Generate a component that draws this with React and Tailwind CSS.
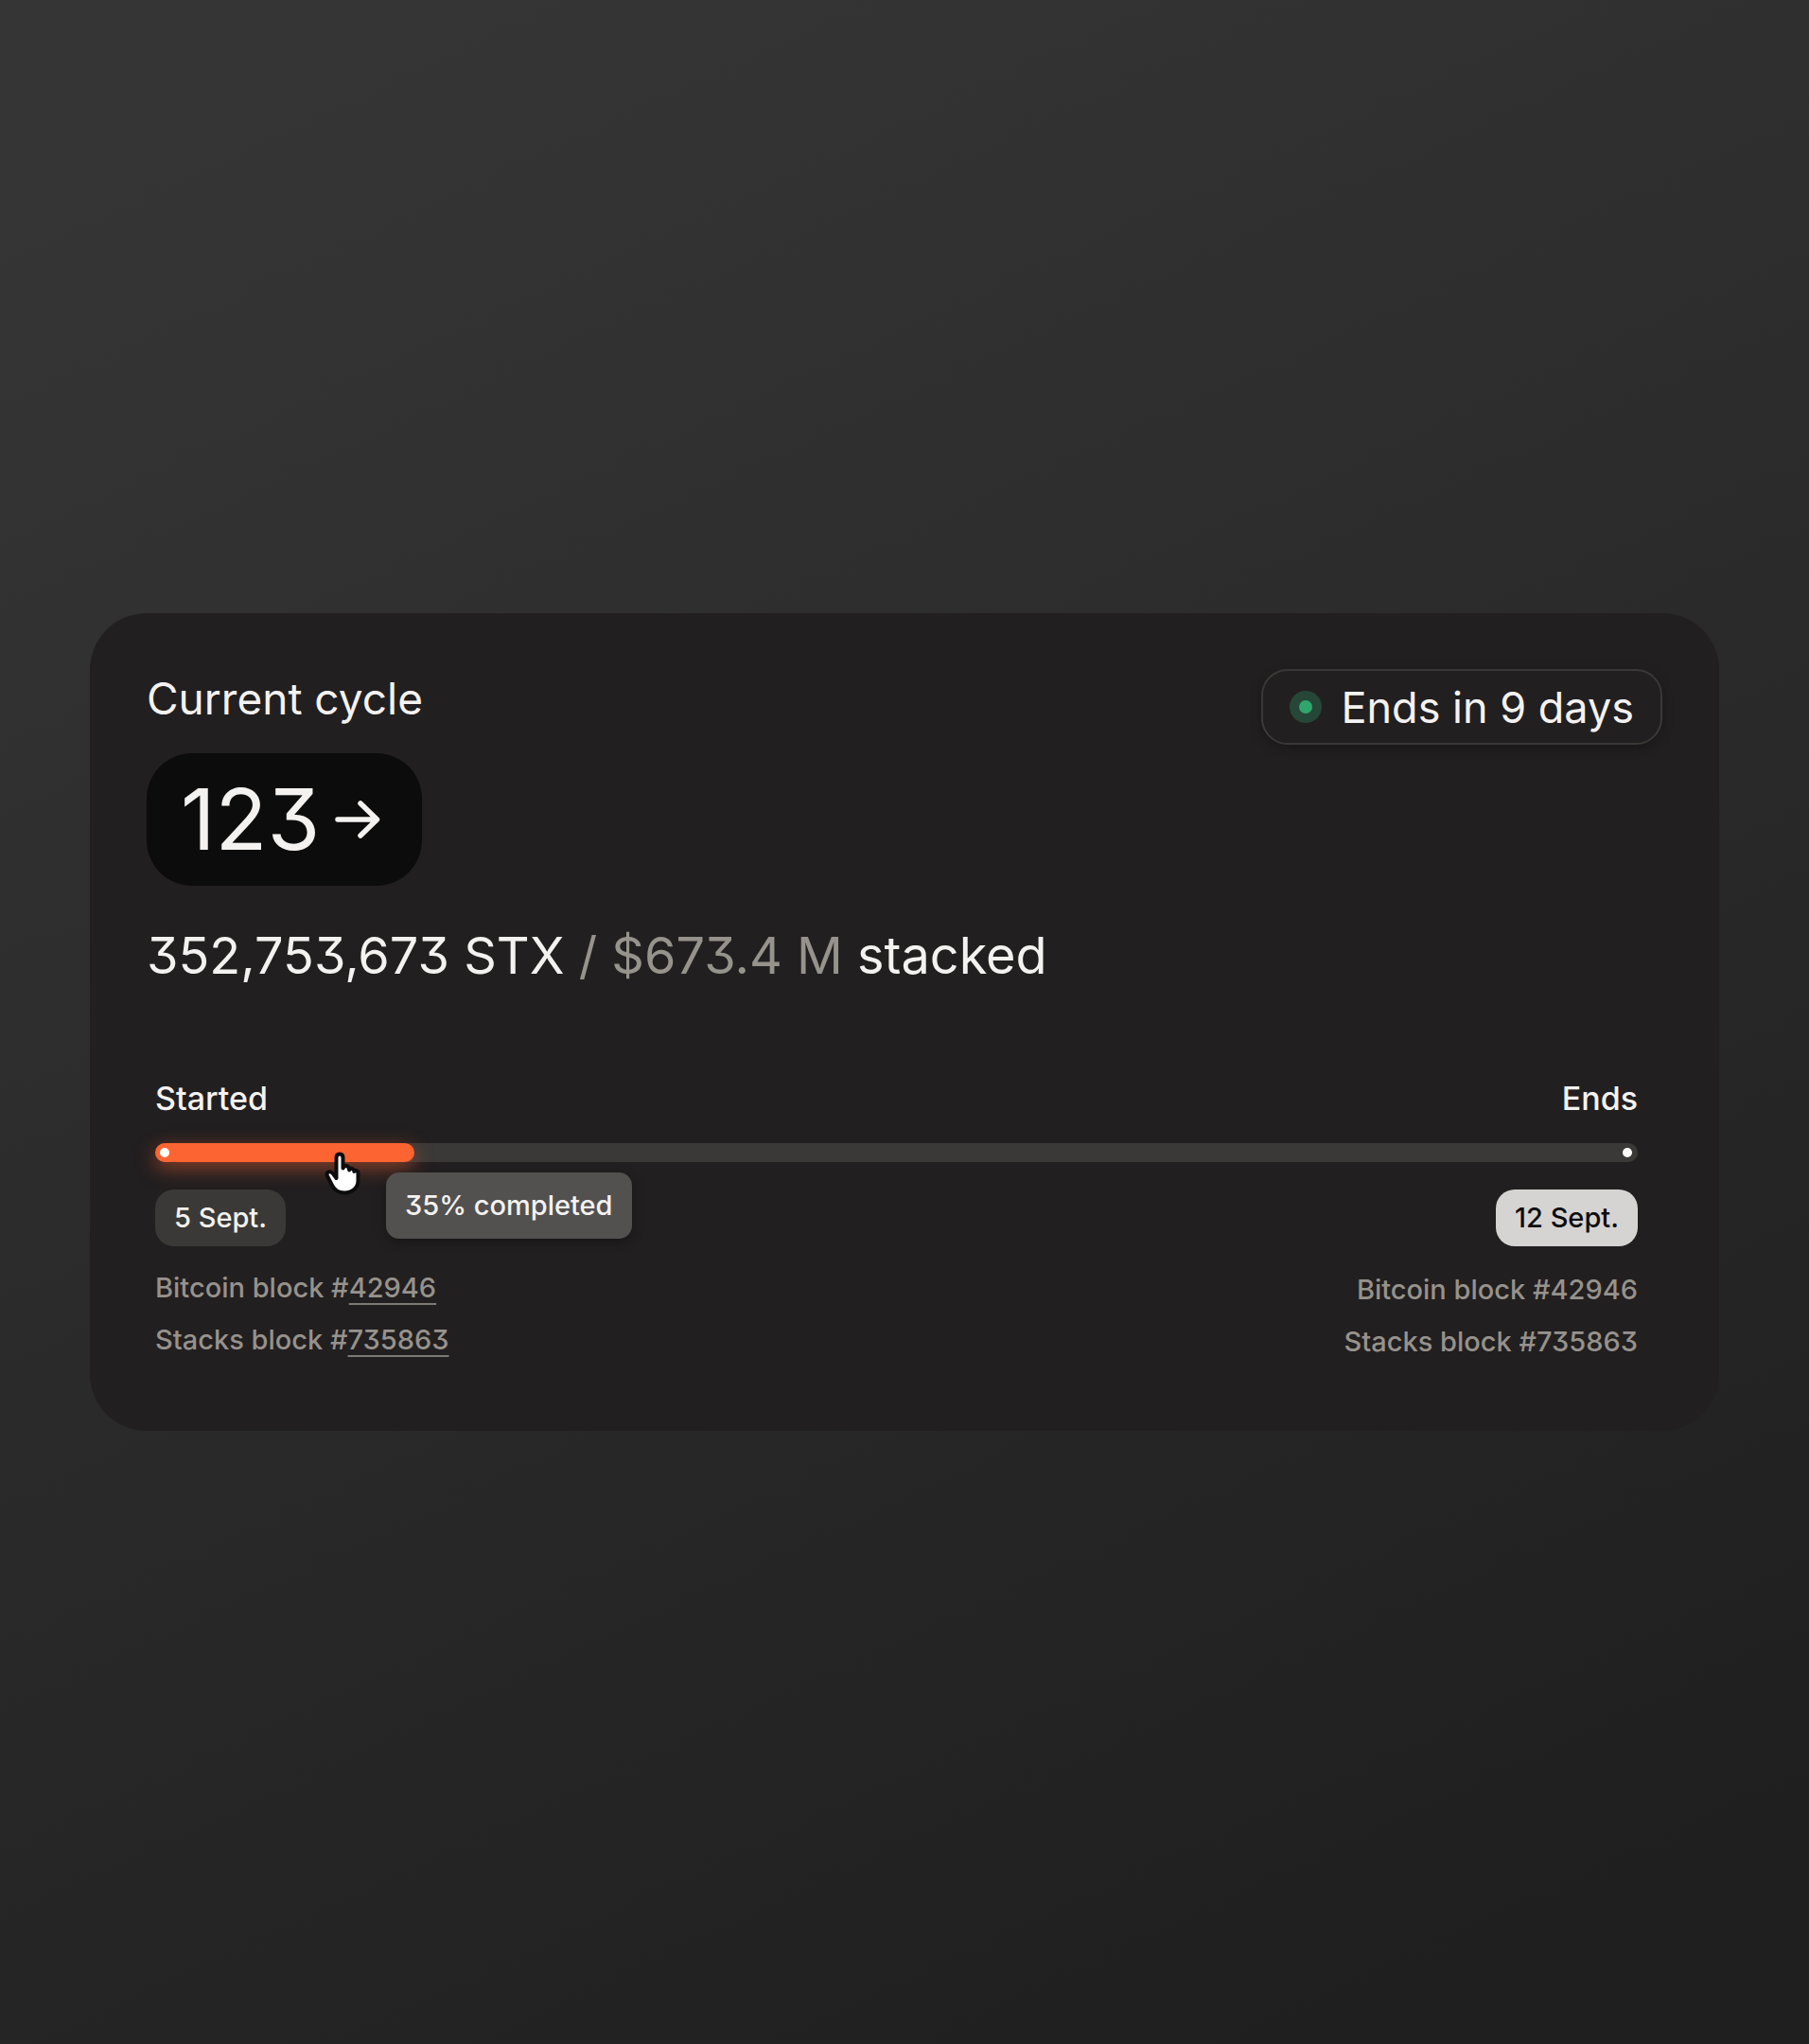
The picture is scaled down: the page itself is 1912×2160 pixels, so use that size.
import { clsx } from "clsx";

const blocks = [
  { label: "Bitcoin block", id: "42946" },
  { label: "Stacks block", id: "735863" },
];

function ArrowRight() {
  return (
    <svg width="48" height="40" viewBox="0 0 48 40" fill="none" aria-hidden="true">
      <path
        d="M3 20H44M27 3L44.500 20L27 37"
        stroke="currentColor"
        strokeWidth="5.500"
        strokeLinecap="round"
        strokeLinejoin="round"
      />
    </svg>
  );
}

function HandCursor({ className }) {
  return (
    <svg width="38" height="46" viewBox="0 0 38 46" className={className} aria-hidden="true">
      <path
        d="M12.500 6.500Q12.500 2.500 16 2.500Q19.500 2.500 19.500 6.500V17.500C20.500 15.500 22 14.800 23.500 15.200C25.500 15.700 26.200 17.200 26.200 19.500C27 17.800 28.300 17.500 29.800 18.200C31 18.800 31.300 20 31.300 21C32.500 19.500 35.500 19.800 35.500 23V30.500C35.500 38.500 29 43.500 21 43.500C14 43.500 9.500 39 7.500 34.500L2.800 25.500C1.800 23 3.500 21.200 5.500 21.200C7.500 21.200 8.800 23 10 24.500L12.500 28Z"
        fill="white"
        stroke="#0c0c0d"
        strokeWidth="4"
        strokeLinejoin="round"
      />
    </svg>
  );
}

function StatusBadge({ children }) {
  return (
    <div className="flex h-20 items-center gap-5 rounded-[28px] border-2 border-[#3b3937] px-7 text-[45px] leading-none shadow-[0_4px_12px_rgba(0,0,0,0.25)]">
      <span className="grid size-[34px] place-items-center rounded-full bg-[#264737]">
        <span className="size-[14px] rounded-full bg-[#30a66d]" />
      </span>
      {children}
    </div>
  );
}

function DateChip({ light, children }) {
  return (
    <span
      className={clsx(
        "flex h-[60px] items-center rounded-[20px] px-5 text-[29px] font-medium",
        light ? "bg-[#d6d4d2] text-[#0c0c0d]" : "bg-[#3b3937]"
      )}
    >
      {children}
    </span>
  );
}

function Progress({ width }) {
  return (
    <div className="relative">
      <div
        role="progressbar"
        aria-label="Cycle progress"
        aria-valuenow={35}
        className="flex h-5 items-center justify-between rounded-full bg-[#3b3937]"
      >
        <div
          className="flex h-5 items-center rounded-full bg-[#fc6432] px-[5px] shadow-[0_6px_20px_rgba(252,100,50,0.5)]"
          style={{ width }}
        >
          <span className="size-[10px] rounded-full bg-white" />
        </div>
        <span className="mr-[6px] size-[10px] rounded-full bg-white" />
      </div>
      <div
        role="tooltip"
        className="absolute top-[31px] left-[244px] flex h-[70px] items-center rounded-[14px] bg-[#535150] px-5 text-[29px] font-medium whitespace-nowrap shadow-[0_4px_12px_rgba(0,0,0,0.3)]"
      >
        35% completed
      </div>
      <HandCursor className="absolute top-[9px] left-[179px]" />
    </div>
  );
}

export default function App() {
  return (
    <main className="flex min-h-screen items-center bg-linear-[155deg,#353535_8%,#1f1f1f_92%] px-[95px] font-[Inter,sans-serif] text-[#f4f2f0] [font-feature-settings:'cv09']">
      <section className="w-full rounded-[60px] bg-[#221f20] px-[60px] pt-[59px] pb-[72px]">
        <header className="flex items-start justify-between">
          <div>
            <h2 className="text-[46px] leading-[62px]">Current cycle</h2>
            <button
              type="button"
              className="mt-[27px] flex h-[140px] cursor-pointer items-center gap-4 rounded-[48px] bg-[#0c0c0c] pr-11 pl-9 text-[90px] leading-none"
            >
              123
              <ArrowRight />
            </button>
          </div>
          <StatusBadge>Ends in 9 days</StatusBadge>
        </header>

        <p className="mt-[42px] text-[54px] leading-[64px]">
          352,753,673 STX <span className="text-[#96928c]">/ $673.4 M</span> stacked
        </p>

        <div className="mt-[99px] pr-[26px] pl-[9px]">
          <div className="mb-[27px] flex justify-between text-[34px] leading-10 font-medium">
            <span>Started</span>
            <span>Ends</span>
          </div>
          <Progress width="17.5%" />
          <div className="mt-[29px] flex justify-between">
            <div className="flex flex-col items-start">
              <DateChip>5 Sept.</DateChip>
              <ul className="mt-[22px] flex flex-col gap-[11px] text-[29px] leading-[44px] font-medium text-[#96928c]">
                {blocks.map((block) => (
                  <li key={block.id}>
                    {block.label} #
                    <a
                      href={`#${block.id}`}
                      className="underline decoration-[#7d7974] decoration-2 underline-offset-[6px] [text-decoration-skip-ink:none]"
                    >
                      {block.id}
                    </a>
                  </li>
                ))}
              </ul>
            </div>
            <div className="flex flex-col items-end">
              <DateChip light>12 Sept.</DateChip>
              <ul className="mt-6 flex flex-col gap-[11px] text-right text-[29px] leading-[44px] font-medium text-[#96928c]">
                {blocks.map((block) => (
                  <li key={block.id}>
                    {block.label} #{block.id}
                  </li>
                ))}
              </ul>
            </div>
          </div>
        </div>
      </section>
    </main>
  );
}
